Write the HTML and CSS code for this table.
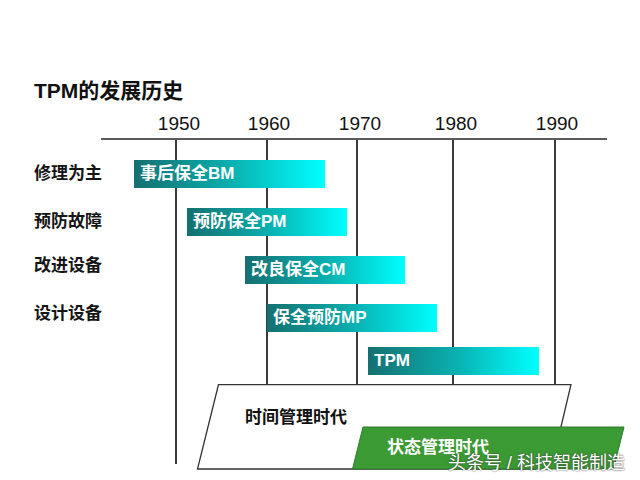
FILE: index.html
```html
<!DOCTYPE html>
<html lang="zh">
<head>
<meta charset="utf-8">
<title>TPM的发展历史</title>
<link rel="stylesheet" href="styles.css">
</head>
<body>
<div class="page">
  <h1 class="title">TPM的发展历史</h1>
  <div class="chart">
    <div class="gridline gridline-long" style="left:175px"></div>
    <div class="gridline" style="left:266px"></div>
    <div class="gridline" style="left:356px"></div>
    <div class="gridline" style="left:452px"></div>
    <div class="gridline" style="left:554px"></div>

    <div class="axis">
      <span class="year" style="left:78px">1950</span>
      <span class="year" style="left:168px">1960</span>
      <span class="year" style="left:259px">1970</span>
      <span class="year" style="left:355px">1980</span>
      <span class="year" style="left:456px">1990</span>
    </div>

    <div class="row">
      <div class="label">修理为主</div>
      <div class="track"><div class="bar" style="margin-left:34px;width:191px">事后保全BM</div></div>
    </div>
    <div class="row">
      <div class="label">预防故障</div>
      <div class="track"><div class="bar" style="margin-left:87px;width:160px">预防保全PM</div></div>
    </div>
    <div class="row">
      <div class="label label-up">改进设备</div>
      <div class="track"><div class="bar" style="margin-left:145px;width:160px">改良保全CM</div></div>
    </div>
    <div class="row">
      <div class="label label-up">设计设备</div>
      <div class="track"><div class="bar" style="margin-left:167px;width:170px">保全预防MP</div></div>
    </div>
    <div class="row row-last">
      <div class="label"></div>
      <div class="track"><div class="bar" style="margin-left:268px;width:171px">TPM</div></div>
    </div>

    <div class="eras">
      <svg class="eras-shapes" width="640" height="90" viewBox="0 0 640 90">
        <polygon class="era-time" points="218.5,0.5 571,0.5 551,85 197.5,85"/>
        <polygon class="era-state" points="363,43 624,43 613.5,85 352.5,85"/>
      </svg>
      <div class="era-label era-label-time">时间管理时代</div>
      <div class="era-label era-label-state">状态管理时代</div>
    </div>
  </div>
  <div class="watermark">头条号 / 科技智能制造</div>
</div>
</body>
</html>
```

FILE: styles.css
```css
html, body {
  margin: 0;
  padding: 0;
  background: #ffffff;
}

.page {
  position: relative;
  width: 640px;
  height: 480px;
  overflow: hidden;
  padding-top: 79px;
  box-sizing: border-box;
  font-family: "Liberation Sans", "Noto Sans CJK SC", sans-serif;
  color: #111111;
}

.title {
  margin: 0;
  padding-left: 34px;
  font-size: 21px;
  line-height: 23px;
  font-weight: 700;
}

.chart {
  position: relative;
  z-index: 0;
}

.gridline {
  position: absolute;
  top: 37px;
  width: 1.5px;
  height: 245px;
  background: #3a3a3a;
  z-index: -1;
}

.gridline-long {
  height: 325px;
}

.axis {
  position: relative;
  margin-left: 101px;
  width: 506px;
  height: 36px;
  border-bottom: 2px solid #5a5a5a;
}

.year {
  position: absolute;
  top: 11px;
  transform: translateX(-50%);
  font-size: 19px;
  line-height: 22px;
  color: #111111;
}

.row {
  display: flex;
  height: 28px;
  padding-top: 20px;
}

.row-last {
  padding-top: 15px;
}

.label {
  width: 100px;
  box-sizing: border-box;
  padding-left: 34px;
  flex: none;
  font-size: 17px;
  line-height: 28px;
  font-weight: 700;
  color: #151515;
  white-space: nowrap;
}

.label-up {
  margin-top: -4px;
}

.track {
  display: flex;
  flex: 1;
}

.bar {
  flex: none;
  height: 28px;
  box-sizing: border-box;
  padding-left: 6px;
  background: linear-gradient(90deg, #167070 0%, #0aaeae 50%, #00ffff 100%);
  color: #ffffff;
  font-size: 17px;
  line-height: 28px;
  font-weight: 700;
  white-space: nowrap;
}

.eras {
  position: relative;
  height: 86px;
  margin-top: 9px;
}

.eras-shapes {
  position: absolute;
  left: 0;
  top: 0;
}

.era-time {
  fill: #ffffff;
  stroke: #333333;
  stroke-width: 1.3;
}

.era-state {
  fill: #3b9a33;
  stroke: #2d7d2a;
  stroke-width: 1;
}

.era-label {
  position: relative;
  font-size: 17px;
  line-height: 22px;
  font-weight: 700;
  white-space: nowrap;
}

.era-label-time {
  padding-top: 23px;
  padding-left: 245px;
  color: #111111;
}

.era-label-state {
  margin-top: 8px;
  padding-left: 387px;
  color: #ffffff;
}

.watermark {
  position: absolute;
  left: 448px;
  top: 452px;
  font-size: 18px;
  line-height: 22px;
  color: #ffffff;
  white-space: nowrap;
  text-shadow: 0 0 1px #555555, 0 0 2px rgba(0, 0, 0, 0.5);
}
```
